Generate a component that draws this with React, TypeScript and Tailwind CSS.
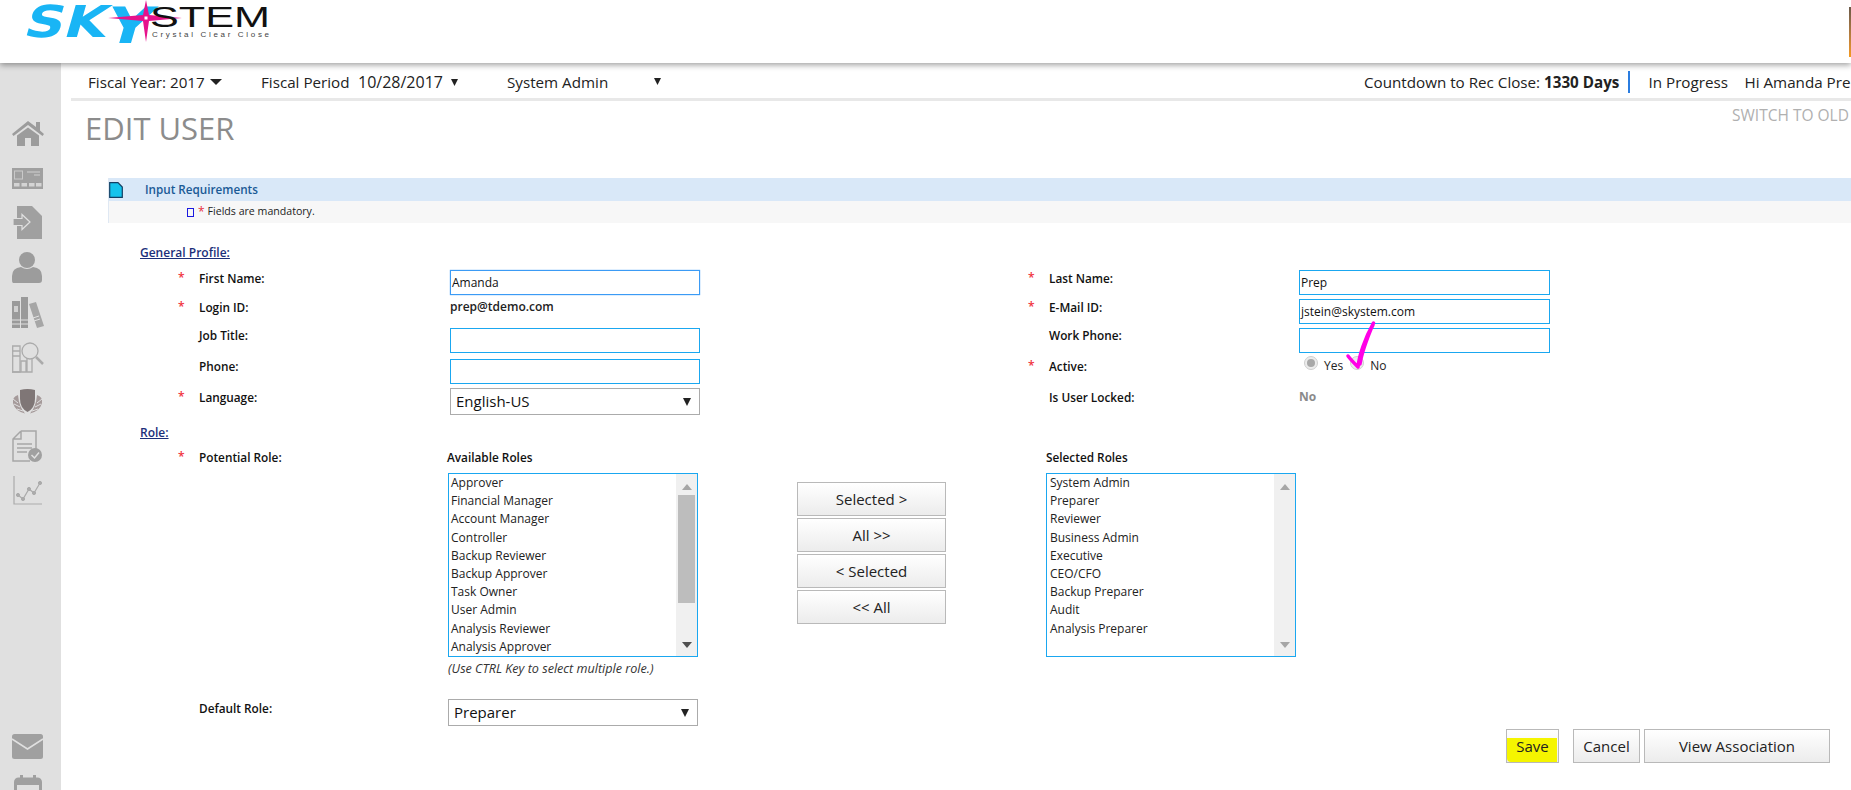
import React from "react";

const available = ["Approver","Financial Manager","Account Manager","Controller","Backup Reviewer","Backup Approver","Task Owner","User Admin","Analysis Reviewer","Analysis Approver"];
const selected = ["System Admin","Preparer","Reviewer","Business Admin","Executive","CEO/CFO","Backup Preparer","Audit","Analysis Preparer"];

function Logo() {
  return (
    <svg width="280" height="63" viewBox="0 0 280 63" className="block">
      <g transform="translate(22 37) skewX(-16) scale(1.25 1)">
        <text x="0" y="0" fontFamily="'DejaVu Sans', sans-serif" fontWeight="700" fontSize="44" fill="#19b5f5">
          SK<tspan fontSize="50" dy="6">Y</tspan>
        </text>
      </g>
      <path d="M146 0 L149 15 L182 18 L149 21 L146 42 L143 21 L108 18 L143 15 Z" fill="#e6128c" />
      <rect x="144.500" y="16.500" width="3" height="3" fill="#fff" />
      <text x="150" y="27" fontFamily="'Liberation Sans', sans-serif" fontSize="29" fill="#111" textLength="120" lengthAdjust="spacingAndGlyphs">STEM</text>
      <text x="152" y="37" fontFamily="'Liberation Sans', sans-serif" fontSize="8" fill="#444" textLength="117" lengthAdjust="spacing">Crystal Clear Close</text>
    </svg>
  );
}

function Sidebar() {
  return (
    <div className="w-[61px] shrink-0 bg-[#e0e0e0] h-[727px] flex flex-col items-start pl-[12px] pt-[58px] overflow-hidden">
      <svg width="32" height="26" viewBox="0 0 32 26" fill="#9c9c9c" className="shrink-0">
        <path d="M16 0 L24 6 V1 H28 V9.500 L32 13 L30.500 15 L16 4 L1.500 15 L0 13 Z" />
        <path d="M5 14.500 L16 6.500 L27 14.500 V25 H19 V17 H13 V25 H5 Z" />
      </svg>
      <svg width="31" height="21" viewBox="0 0 31 21" className="shrink-0 mt-[21px]">
        <rect width="31" height="21" fill="#a0a0a0" />
        <rect x="2.500" y="3" width="8" height="8" fill="none" stroke="#c9c9c9" />
        <path d="M15 4 H28 M22 7 H28" stroke="#d0d0d0" />
        <rect x="2" y="15" width="5.500" height="3.500" fill="#d4d4d4" />
        <rect x="9.500" y="15" width="5.500" height="3.500" fill="#d4d4d4" />
        <rect x="17" y="15" width="5.500" height="3.500" fill="#d4d4d4" />
        <rect x="24" y="15" width="5.500" height="3.500" fill="#d4d4d4" />
      </svg>
      <svg width="30" height="33" viewBox="0 0 30 33" className="shrink-0 mt-[17px]">
        <path d="M5 0 H20 L30 10 V33 H5 Z" fill="#a0a0a0" />
        <path d="M1 12.500 H10 V8.500 L18 16 L10 23.500 V19.500 H1 Z" fill="#a0a0a0" stroke="#e0e0e0" strokeWidth="1.200" />
      </svg>
      <svg width="30" height="31" viewBox="0 0 30 31" fill="#9c9c9c" className="shrink-0 mt-[13px]">
        <circle cx="15" cy="8" r="8" />
        <path d="M1 31 Q0 31 0 28 V24 Q0 16 9 15 Q15 19 21 15 Q30 16 30 24 V28 Q30 31 27 31 Z" />
      </svg>
      <svg width="32" height="31" viewBox="0 0 32 31" className="shrink-0 mt-[14px]">
        <rect x="0" y="4" width="8" height="27" fill="#9a9a9a" />
        <rect x="9" y="0" width="7" height="31" fill="#9a9a9a" />
        <path d="M17 7 L24 5 L32 29 L25 31 Z" fill="#a6a6a6" />
        <path d="M0 23 H16 M0 27 H16" stroke="#e0e0e0" />
        <rect x="2" y="9" width="4" height="6" fill="#d0d0d0" />
        <path d="M21 21 L27 19 M22 24 L28 22" stroke="#e0e0e0" />
      </svg>
      <svg width="32" height="31" viewBox="0 0 32 31" fill="none" stroke="#ababab" strokeWidth="1.300" className="shrink-0 mt-[14px]">
        <path d="M0.700 4 H8 V30 H0.700 Z" />
        <path d="M0.700 9 H8 M0.700 14 H8" />
        <path d="M9 30 V19 H14 V30 M15 30 V15 H20 V30 H0" />
        <circle cx="18" cy="9" r="8" fill="#e0e0e0" />
        <path d="M24 15 L31 22" strokeWidth="2.500" />
      </svg>
      <svg width="31" height="25" viewBox="0 0 31 25" className="shrink-0 mt-[16px]">
        <path d="M8 1 Q15.500 -1 23 1 V10 Q23 19 15.500 23 Q8 19 8 10 Z" fill="#7f7676" />
        <path d="M6 6 Q0 8 1 14 Q3 22 13 24.500 Q7 18 6 6 Z" fill="#a59a9a" />
        <path d="M25 6 Q31 8 30 14 Q28 22 18 24.500 Q24 18 25 6 Z" fill="#a59a9a" />
        <path d="M1 10 L6 14 M2 15 L8 18 M5 20 L11 22 M30 10 L25 14 M29 15 L23 18 M26 20 L20 22" stroke="#e0e0e0" />
      </svg>
      <svg width="30" height="32" viewBox="0 0 30 32" className="shrink-0 mt-[16px]">
        <path d="M9 1 H24 V20 M9 1 L1 9 V31 H18 M1 9 H9 V1" fill="none" stroke="#a6a6a6" strokeWidth="1.500" />
        <path d="M5 14 H20 M5 18 H20 M5 22 H15" stroke="#a6a6a6" strokeWidth="1.500" />
        <circle cx="23" cy="25" r="7" fill="#a0a0a0" />
        <path d="M19.500 25 L22.500 28 L27 22.500" fill="none" stroke="#e0e0e0" strokeWidth="1.500" />
      </svg>
      <svg width="31" height="30" viewBox="0 0 31 30" fill="none" stroke="#ababab" className="shrink-0 mt-[14px]">
        <path d="M2 0 V28 H30" strokeWidth="1.200" />
        <path d="M6 19 L11 23 L17 13 L22 17 L28 7" strokeWidth="1.200" />
        <circle cx="6" cy="19" r="1.600" fill="#ababab" />
        <circle cx="11" cy="23" r="1.600" fill="#ababab" />
        <circle cx="17" cy="13" r="1.600" fill="#ababab" />
        <circle cx="22" cy="17" r="1.600" fill="#ababab" />
        <circle cx="28" cy="7" r="1.600" fill="#ababab" />
      </svg>
      <svg width="31" height="25" viewBox="0 0 31 25" className="shrink-0 mt-[228px]">
        <rect width="31" height="25" rx="2.500" fill="#a0a0a0" />
        <path d="M0 5 L15.500 15 L31 5" fill="none" stroke="#e0e0e0" strokeWidth="1.500" />
      </svg>
      <svg width="28" height="22" viewBox="0 0 28 22" className="shrink-0 mt-[16px] ml-[2px]">
        <rect x="1.500" y="4" width="25" height="18" rx="3" fill="none" stroke="#a0a0a0" strokeWidth="3" />
        <rect x="1" y="4" width="26" height="6" fill="#a0a0a0" />
        <rect x="6" y="0" width="3" height="6" fill="#a0a0a0" />
        <rect x="19" y="0" width="3" height="6" fill="#a0a0a0" />
      </svg>
    </div>
  );
}

function TextInput({ value, focused, cls }: { value?: string; focused?: boolean; cls?: string }) {
  return (
    <div className={`h-[25px] flex items-center pl-[1px] text-[12px] text-[#111] border ${focused ? "border-[#3b9bf5] shadow-[0_0_1px_#3b9bf5]" : "border-[#1aa7f0]"} ${cls ?? ""}`}>
      {value}
    </div>
  );
}

function SelectBox({ value, cls }: { value: string; cls: string }) {
  return (
    <div className={`h-[27px] flex items-center justify-between pl-[5px] pr-[8px] text-[15px] text-[#111] border border-[#ababab] ${cls}`}>
      <span>{value}</span>
      <svg width="8" height="8" viewBox="0 0 8 8">
        <path d="M0 0 H8 L4 8 Z" fill="#222" />
      </svg>
    </div>
  );
}

function Label({ star, children, cls }: { star?: boolean; children: React.ReactNode; cls: string }) {
  return (
    <div className={`flex shrink-0 leading-[16px] text-[11.800px] font-semibold text-[#111] ${cls}`}>
      <span className="w-[21px] shrink-0 text-[#f0303c] text-[12px]">{star ? "*" : ""}</span>
      <span>{children}</span>
    </div>
  );
}

function ListBox({ items, thumb, cls, textCls, arrow }: { items: string[]; thumb?: boolean; cls: string; textCls: string; arrow: string }) {
  return (
    <div className={`h-[184px] border border-[#1aa7f0] flex ${cls}`}>
      <div className={`flex-1 ${textCls} text-[12px] leading-[18.200px] text-[#222]`}>
        {items.map((t) => (
          <div key={t}>{t}</div>
        ))}
      </div>
      <div className="w-[21px] shrink-0 bg-[#f0f0f0] flex flex-col items-center">
        <svg width="10" height="6" viewBox="0 0 10 6" className="mt-[10px] shrink-0">
          <path d="M0 6 H10 L5 0 Z" fill="#a6a6a6" />
        </svg>
        {thumb ? <div className="w-[17px] h-[108px] bg-[#bdbdbd] mt-[5px]" /> : <div className="h-[113px]" />}
        <svg width="10" height="6" viewBox="0 0 10 6" className="mt-[39px] shrink-0">
          <path d="M0 0 H10 L5 6 Z" fill={arrow} />
        </svg>
      </div>
    </div>
  );
}

function Btn({ children, cls }: { children: React.ReactNode; cls: string }) {
  return (
    <div className={`relative h-[34px] flex items-center justify-center border border-[#b9b9b9] bg-gradient-to-b from-white to-[#ececec] text-[15px] text-[#222] ${cls}`}>
      {children}
    </div>
  );
}

function Radio({ checked }: { checked?: boolean }) {
  return (
    <span className="w-[14px] h-[14px] rounded-full border border-[#cfcfcf] bg-[#ececec] flex items-center justify-center shrink-0">
      {checked && <span className="w-[8px] h-[8px] rounded-full bg-[#a8a8a8]" />}
    </span>
  );
}

export default function App() {
  return (
    <div className="w-[1851px] h-[790px] overflow-hidden bg-white font-['Open_Sans',sans-serif]">
      <header className="relative z-10 h-[63px] bg-white flex justify-between shadow-[0_2px_6px_rgba(0,0,0,0.38)]">
        <Logo />
        <div className="w-[2px] h-[50px] mt-[7px] bg-gradient-to-b from-[#6b5a48] to-[#f59a1c]" />
      </header>
      <div className="flex">
        <Sidebar />
        <main className="flex-1 min-w-0 pl-[10px] overflow-hidden">
          {/* top bar */}
          <div className="h-[38px] border-b-[3px] border-[#e8e8e8] pl-[17px] pt-[3px] flex items-center text-[15.200px] text-[#222] whitespace-nowrap">
            <div className="w-[173px] shrink-0 flex items-center gap-[5px]">
              <span>Fiscal Year: 2017</span>
              <svg width="12" height="6" viewBox="0 0 12 6"><path d="M0 0 H12 L6 6 Z" fill="#222" /></svg>
            </div>
            <div className="w-[97px] shrink-0">Fiscal Period</div>
            <div className="w-[149px] shrink-0 flex items-center gap-[8px] text-[16px]">
              <span>10/28/2017</span>
              <svg width="7" height="7" viewBox="0 0 7 7"><path d="M0 0 H7 L3.500 7 Z" fill="#222" /></svg>
            </div>
            <div className="w-[857px] shrink-0 flex items-center">
              <span className="w-[147px]">System Admin</span>
              <svg width="7" height="7" viewBox="0 0 7 7"><path d="M0 0 H7 L3.500 7 Z" fill="#222" /></svg>
            </div>
            <div className="w-[264px] shrink-0">
              Countdown to Rec Close: <b>1330 Days</b>
            </div>
            <div className="w-[1.500px] h-[22px] bg-[#2b7de0] shrink-0" />
            <div className="w-[96px] pl-[19px] shrink-0 box-content">In Progress</div>
            <div className="shrink-0">Hi Amanda Prep</div>
          </div>

          {/* title */}
          <div className="h-[77px] flex items-start justify-between overflow-hidden">
            <h1 className="ml-[14px] mt-[6px] text-[31px] leading-[42px] text-[#8c8c8c]">EDIT USER</h1>
            <div className="w-[119px] shrink-0 mt-[4px] text-[15.500px] leading-[20px] text-[#b0b0b0] whitespace-nowrap">SWITCH TO OLD</div>
          </div>

          {/* input requirements */}
          <div className="ml-[37px] border-l border-b border-[#dfe8f3] h-[45px]">
            <div className="h-[23px] bg-[#d9e8f8] flex items-center">
              <svg width="14" height="16" viewBox="0 0 14 16" className="shrink-0">
                <path d="M0.700 0.700 H9 L13.300 5 V15.300 H0.700 Z" fill="#14c3ec" stroke="#123f63" strokeWidth="1.200" />
              </svg>
              <span className="ml-[22px] text-[11.700px] font-semibold text-[#1a5a96]">Input Requirements</span>
            </div>
            <div className="h-[22px] bg-[#f7f7f7] flex items-center pl-[78px] text-[10.600px] text-[#222]">
              <span className="w-[7px] h-[9px] border border-[#1a1ae0] shrink-0" />
              <span className="ml-[4px] mr-[3px] text-[#e8303c] text-[12px]">*</span>
              <span>Fields are mandatory.</span>
            </div>
          </div>

          {/* form */}
          <div className="pl-[69px]">
            <div className="pt-[22px] h-[47px] text-[12px] leading-[16px] font-semibold text-[#1c2f7a] underline">General Profile:</div>
          </div>

          <div className="pl-[107px] flex h-[29px]">
            <Label star cls="w-[272px]">First Name:</Label>
            <div className="w-[578px] shrink-0"><TextInput value="Amanda" focused cls="w-[250px]" /></div>
            <Label star cls="w-[271px]">Last Name:</Label>
            <TextInput value="Prep" cls="w-[251px]" />
          </div>
          <div className="pl-[107px] flex h-[28px]">
            <Label star cls="w-[272px]">Login ID:</Label>
            <div className="w-[578px] shrink-0 text-[12px] font-semibold leading-[16px] text-[#222]">prep@tdemo.com</div>
            <Label star cls="w-[271px]">E-Mail ID:</Label>
            <TextInput value="jstein@skystem.com" cls="w-[251px]" />
          </div>
          <div className="pl-[107px] flex h-[31px]">
            <Label cls="w-[272px]">Job Title:</Label>
            <div className="w-[578px] shrink-0 pt-[1px]"><TextInput cls="w-[250px]" /></div>
            <Label cls="w-[271px]">Work Phone:</Label>
            <div className="pt-[1px]"><TextInput cls="w-[251px]" /></div>
          </div>
          <div className="pl-[107px] flex h-[30px]">
            <Label cls="w-[272px]">Phone:</Label>
            <div className="w-[578px] shrink-0 pt-[1px]"><TextInput cls="w-[250px]" /></div>
            <Label star cls="w-[271px]">Active:</Label>
            <div className="relative flex items-start text-[12px] leading-[16px] text-[#222]">
              <span className="ml-[5px] -mt-[2px]"><Radio checked /></span>
              <span className="ml-[6px]">Yes</span>
              <span className="ml-[7px] -mt-[2px]"><Radio /></span>
              <span className="ml-[6px]">No</span>
              <svg width="34" height="50" viewBox="0 0 34 50" className="absolute left-[46px] -top-[38px]">
                <path d="M3 36 C6 40 10 44 13 47 C14 36 20 18 28.500 3 C23 16 17 30 15 44 C17 32 22 16 28 5" fill="none" stroke="#ff00e6" strokeWidth="3.500" strokeLinecap="round" strokeLinejoin="round" />
              </svg>
            </div>
          </div>
          <div className="pl-[107px] flex h-[36px]">
            <Label star cls="w-[272px] pt-[1px]">Language:</Label>
            <div className="w-[578px] shrink-0"><SelectBox value="English-US" cls="w-[250px]" /></div>
            <Label cls="w-[271px] pt-[1px]">Is User Locked:</Label>
            <div className="text-[12px] leading-[16px] pt-[1px] font-bold text-[#8a8a8a]">No</div>
          </div>

          <div className="pl-[69px] h-[25px] pt-[1px] text-[12px] leading-[16px] font-semibold text-[#1c2f7a]">
            <span className="underline">Role:</span>
          </div>

          <div className="pl-[107px] flex h-[250px]">
            <Label star cls="w-[270px]">Potential Role:</Label>
            <div className="w-[250px] shrink-0">
              <div className="h-[24px] -ml-px text-[11.800px] leading-[16px] font-semibold text-[#111]">Available Roles</div>
              <ListBox items={available} thumb cls="w-[250px]" textCls="pl-[2px]" arrow="#505050" />
              <div className="pt-[4px] text-[12.600px] leading-[16px] italic text-[#333] whitespace-nowrap">(Use CTRL Key to select multiple role.)</div>
            </div>
            <div className="ml-[99px] w-[149px] shrink-0 pt-[33px] flex flex-col gap-[2px]">
              <Btn cls="w-[149px]">Selected &gt;</Btn>
              <Btn cls="w-[149px]">All &gt;&gt;</Btn>
              <Btn cls="w-[149px]">&lt; Selected</Btn>
              <Btn cls="w-[149px]">&lt;&lt; All</Btn>
            </div>
            <div className="ml-[100px] w-[250px] shrink-0">
              <div className="h-[24px] text-[11.800px] leading-[16px] font-semibold text-[#111]">Selected Roles</div>
              <ListBox items={selected} cls="w-[250px]" textCls="pl-[3px]" arrow="#a6a6a6" />
            </div>
          </div>

          <div className="pl-[107px] flex h-[30px]">
            <div className="pt-[1px] flex">
              <Label cls="w-[270px]">Default Role:</Label>
            </div>
            <SelectBox value="Preparer" cls="w-[250px]" />
          </div>

          <div className="pl-[1435px] flex items-start">
            <Btn cls="w-[53px]">
              <span className="absolute left-0 top-[8px] w-[50px] h-[24px] bg-[#f5f500] rounded-bl-[4px]" />
              <span className="relative">Save</span>
            </Btn>
            <Btn cls="w-[67px] ml-[14px]">Cancel</Btn>
            <Btn cls="w-[186px] ml-[4px]">View Association</Btn>
          </div>
        </main>
      </div>
    </div>
  );
}
